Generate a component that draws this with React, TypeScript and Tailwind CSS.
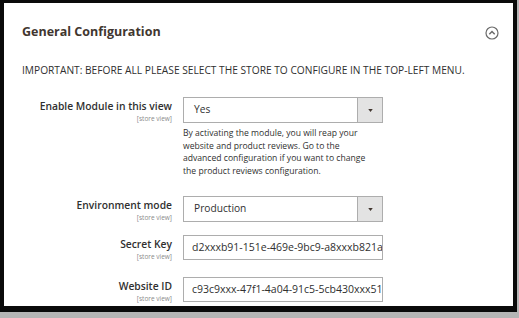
import React from "react";

const font = { fontFamily: '"Open Sans", "Noto Sans", sans-serif' };

function Label({ title }: { title: string }) {
  return (
    <div className="flex flex-col items-end pt-[2px] pr-[11px]">
      <div className="text-[10.3px] font-semibold leading-[14px] text-[#303030]">{title}</div>
      <div className="mt-[1px] text-[6.5px] leading-[10px] text-[#8a8a8a]">[store view]</div>
    </div>
  );
}

function Select({ value }: { value: string }) {
  return (
    <div className="flex h-[26px] w-[200px] border border-[#adadad] bg-white">
      <div className="flex flex-1 items-center pl-[10px] text-[10.2px] text-[#303030]">{value}</div>
      <div className="flex w-[25px] items-center justify-center border-l border-[#adadad] bg-[#e3e3e3]">
        <svg width="5" height="3" viewBox="0 0 6 4">
          <path d="M0 0 L6 0 L3 4 Z" fill="#41362f" />
        </svg>
      </div>
    </div>
  );
}

function Input({ value }: { value: string }) {
  return (
    <div className="flex h-[25px] w-[200px] items-center overflow-hidden whitespace-nowrap border border-[#adadad] bg-white pl-[8px] text-[10.5px] text-[#303030]">
      {value}
    </div>
  );
}

export default function App() {
  return (
    <div style={font} className="h-[318px] w-[519px] bg-[#b5b5b5]">
      <div className="h-[312px] w-[517px] bg-[#0a0a0a] pb-[6px] pl-[4px] pr-[4px] pt-[3px]">
        <div className="h-full w-full bg-[#ffffff]">
          <div className="flex items-center justify-between pl-[18px] pr-[14px] pt-[21px]">
            <div className="text-[12.5px] font-bold leading-[16px] text-[#41362f]">General Configuration</div>
            <svg width="14" height="14" viewBox="0 0 14 14" className="mt-[2px]">
              <circle cx="7" cy="7" r="6" fill="none" stroke="#6b6b6b" strokeWidth="1.2" />
              <path d="M4.3 8.2 L7 5.5 L9.7 8.2" fill="none" stroke="#6b6b6b" strokeWidth="1.5" />
            </svg>
          </div>
          <div className="pl-[18px] pt-[23px] text-[10.2px] leading-[14px] text-[#303030]">
            IMPORTANT: BEFORE ALL PLEASE SELECT THE STORE TO CONFIGURE IN THE TOP-LEFT MENU.
          </div>
          <div className="grid grid-cols-[179px_200px] pt-[20px]">
            <Label title="Enable Module in this view" />
            <div className="flex flex-col">
              <Select value="Yes" />
              <div className="w-[186px] pt-[4px] text-[8.6px] leading-[12.5px] text-[#303030]">
                By activating the module, you will reap your website and product reviews. Go to the advanced configuration if you want to change the product reviews configuration.
              </div>
            </div>
            <div className="col-span-2 h-[19px]" />
            <Label title="Environment mode" />
            <Select value="Production" />
            <div className="col-span-2 h-[12px]" />
            <Label title="Secret Key" />
            <Input value="d2xxxb91-151e-469e-9bc9-a8xxxb821a" />
            <div className="col-span-2 h-[15px]" />
            <Label title="Website ID" />
            <Input value="c93c9xxx-47f1-4a04-91c5-5cb430xxx51" />
          </div>
        </div>
      </div>
    </div>
  );
}
